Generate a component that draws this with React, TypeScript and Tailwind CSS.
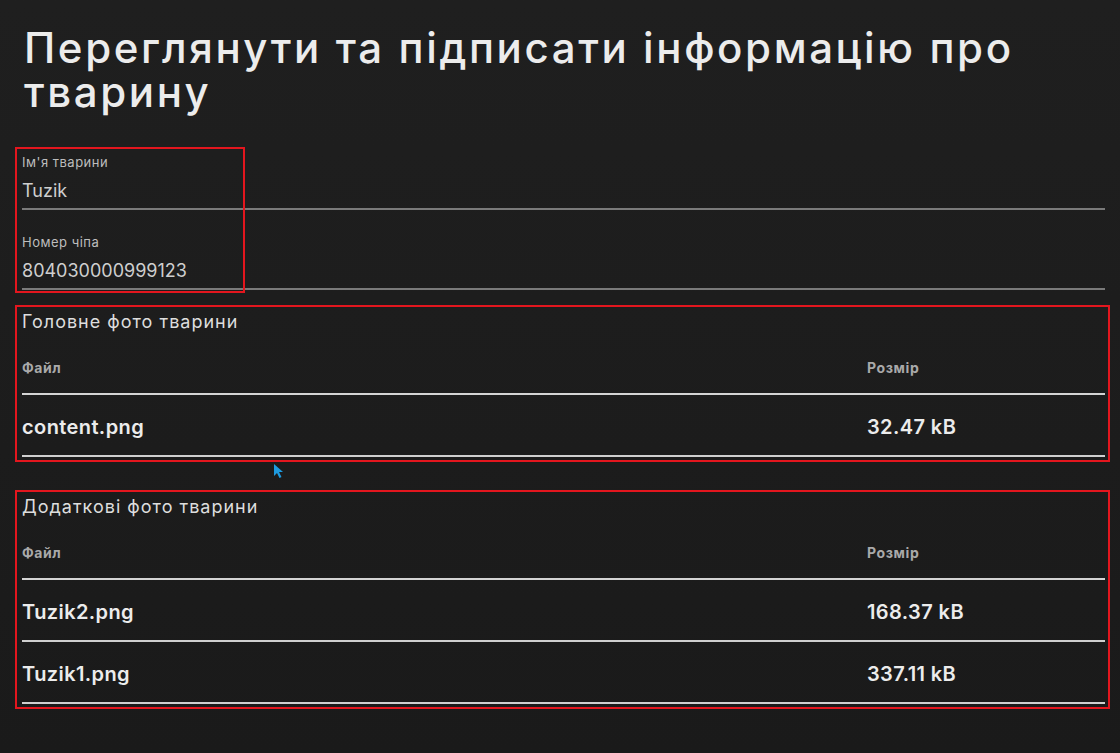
const font = { fontFamily: 'Inter, "Noto Sans", sans-serif' };

type FileRow = { name: string; size: string };

function Field({ label, value, className = '' }: { label: string; value: string; className?: string }) {
    return (
        <div className={className}>
            <div className="mb-[9px] text-[13px] leading-[16px] tracking-[0.5px] text-[#bdbdbd]">{label}</div>
            <div className="border-b-2 border-[#7a7a7a] pb-[5px] text-[18px] leading-[24px] text-[#cfcfcf]">{value}</div>
        </div>
    );
}

function FileTable({ title, rows, className = '' }: { title: string; rows: FileRow[]; className?: string }) {
    return (
        <section className={`-ml-[7px] -mr-[5px] border-2 border-[#e3161e] pl-[5px] pr-[3px] pt-[3px] pb-[3px] ${className}`}>
            <h2 className="text-[18px] leading-[24px] tracking-[1px] text-[#dedede]">{title}</h2>
            {/* header */}
            <div className="mt-[26px] flex border-b-2 border-[#d4d4d4] pb-[17px] text-[14px] font-bold leading-[16px] tracking-[0.6px] text-[#a9a9a9]">
                <div className="w-[845px]">Файл</div>
                <div>Розмір</div>
            </div>
            {rows.map((r) => (
                <div
                    key={r.name}
                    className="flex h-[62px] items-center border-b-2 border-[#cfcfcf] pt-[3px] text-[20px] font-semibold leading-[28px] tracking-[0.4px] text-[#ececec]"
                >
                    <div className="w-[845px]">{r.name}</div>
                    <div>{r.size}</div>
                </div>
            ))}
        </section>
    );
}

export default function App() {
    return (
        <div
            style={font}
            className="relative h-[753px] w-[1120px] overflow-hidden bg-gradient-to-b from-[#1f1f1f] to-[#1a1a1a] pl-[22px] pr-[15px] pt-[26px]"
        >
            <h1 className="pl-[2px] text-[42px] font-medium leading-[44px] tracking-[2.6px] text-[#ececec]">
                Переглянути та підписати інформацію про тварину
            </h1>

            {/* Fields */}
            <div className="relative mt-[40px]">
                <Field label="Ім'я тварини" value="Tuzik" />
                <Field label="Номер чіпа" value="804030000999123" className="mt-[24px]" />
                <div className="pointer-events-none absolute -left-[7px] -top-[7px] -bottom-[3px] w-[230px] border-2 border-[#e3161e]" />
            </div>

            <FileTable
                className="mt-[15px]"
                title="Головне фото тварини"
                rows={[{ name: 'content.png', size: '32.47 kB' }]}
            />

            <FileTable
                className="mt-[28px]"
                title="Додаткові фото тварини"
                rows={[
                    { name: 'Tuzik2.png', size: '168.37 kB' },
                    { name: 'Tuzik1.png', size: '337.11 kB' },
                ]}
            />

            {/* mouse cursor */}
            <svg className="absolute left-[273px] top-[463px]" width="11" height="16" viewBox="0 0 11 16">
                <path d="M1 1 L1 13 L4 10 L6.5 15 L8.5 14 L6 9 L10 9 Z" fill="#1e9be0" />
            </svg>
        </div>
    );
}
